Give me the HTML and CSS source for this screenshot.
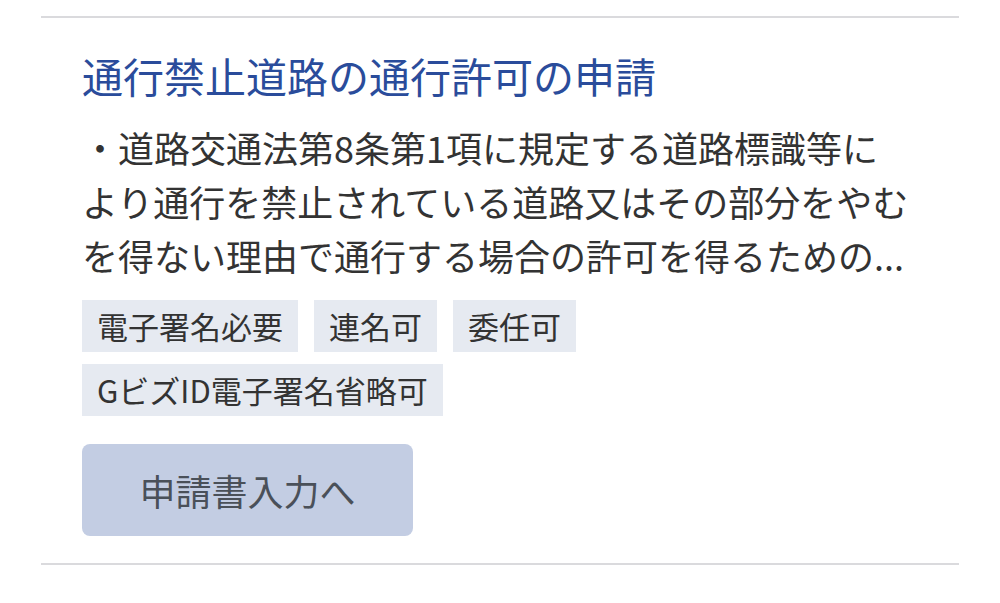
FILE: index.html
```html
<!DOCTYPE html>
<html lang="ja">
<head>
    <meta charset="UTF-8">
    <meta name="viewport" content="width=device-width, initial-scale=1.0">
    <title>手続一覧</title>
    <link rel="stylesheet" href="styles.css">
</head>
<body>
    <div class="procedure">
        <h2 class="procedure-title">通行禁止道路の通行許可の申請</h2>
        <p class="procedure-desc">・道路交通法第8条第1項に規定する道路標識等により通行を禁止されている道路又はその部分をやむを得ない理由で通行する場合の許可を得るための...</p>
        <ul class="tags">
            <li class="tag">電子署名必要</li>
            <li class="tag">連名可</li>
            <li class="tag">委任可</li>
            <li class="tag">GビズID電子署名省略可</li>
        </ul>
        <button type="button" class="btn-apply">申請書入力へ</button>
    </div>
</body>
</html>
```

FILE: styles.css
```css
body {
    margin: 0;
    padding: 16px 41px 0;
    background: #ffffff;
    font-family: "Noto Sans CJK JP", "Noto Sans", sans-serif;
    color: #333333;
}
.procedure {
    border-top: 2px solid #dadadd;
    border-bottom: 2px solid #dadadd;
    padding: 28px 50px 27px 41px;
}
.procedure-title {
    margin: 0;
    font-size: 41px;
    font-weight: 400;
    line-height: 58px;
    color: #2a4c9b;
}
.procedure-desc {
    margin: 16px 0 0;
    font-size: 36px;
    line-height: 54px;
    display: -webkit-box;
    -webkit-line-clamp: 3;
    -webkit-box-orient: vertical;
    overflow: hidden;
}
.tags {
    list-style: none;
    margin: 18px 0 0;
    padding: 0;
    display: flex;
    flex-wrap: wrap;
    gap: 12px 16px;
}
.tag {
    background: #e6eaf1;
    font-size: 31px;
    line-height: 44px;
    padding: 4px 15px;
    color: #333333;
}
.btn-apply {
    display: block;
    margin-top: 28px;
    height: 92px;
    padding: 0 57.5px;
    border: none;
    border-radius: 8px;
    background: #c3cde3;
    color: #4a5059;
    font-family: inherit;
    font-size: 36px;
    cursor: pointer;
}
```
